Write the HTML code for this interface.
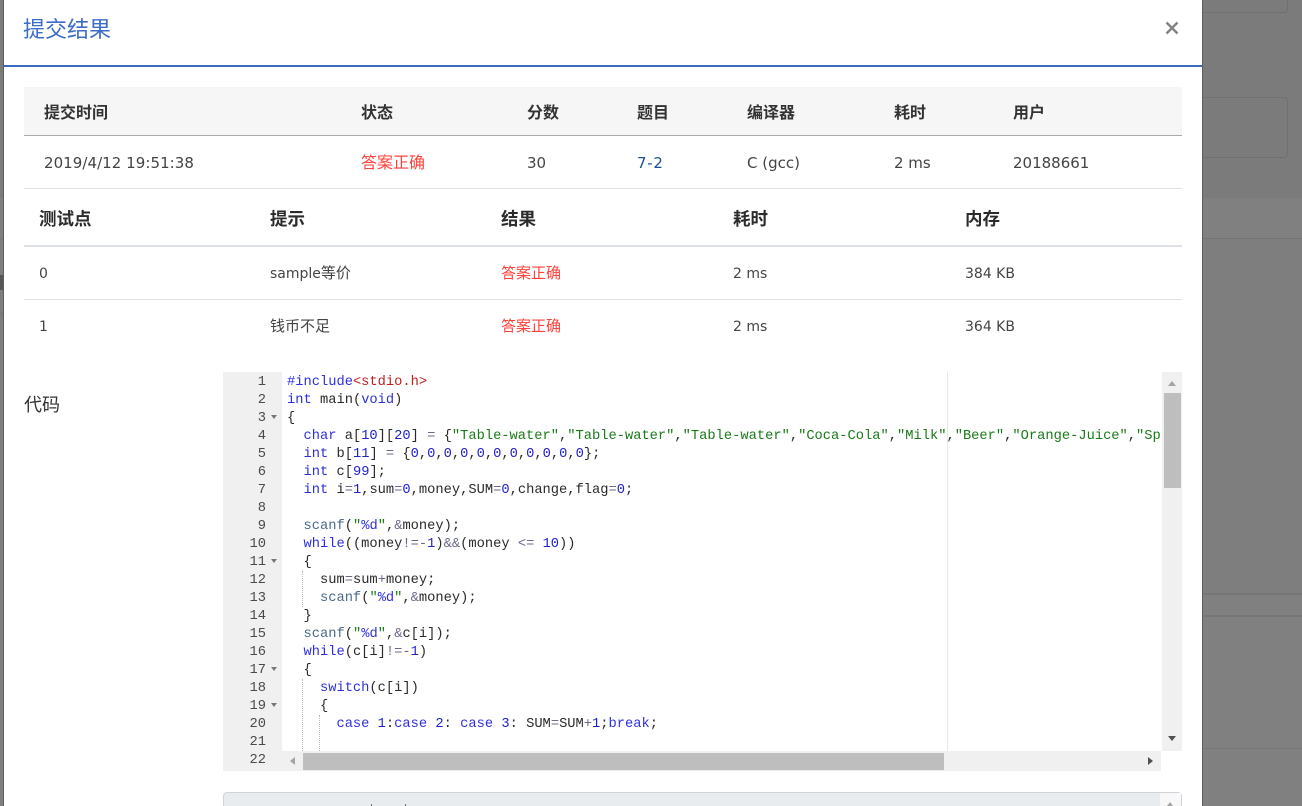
<!DOCTYPE html>
<html><head><meta charset="utf-8">
<style>
html,body{margin:0;padding:0;width:1302px;height:806px;overflow:hidden;background:#808080}
body{position:relative;font-family:"Liberation Sans","Noto Sans CJK SC",sans-serif;font-size:15px;color:#333}
.a{position:absolute}
.t{position:absolute;white-space:nowrap;line-height:20px;font-family:"DejaVu Sans","Noto Sans CJK SC",sans-serif;font-size:14px;color:#444}
.b{font-size:15px}
.c{font-family:"Liberation Sans","Noto Sans CJK SC",sans-serif;font-size:15px}
.th{position:absolute;white-space:nowrap;line-height:20px;font-weight:bold;font-size:16px;color:#333}
.r{color:#ff413a;font-family:"Liberation Sans","Noto Sans CJK SC",sans-serif;font-size:15px}
#code{position:absolute;left:282px;top:372px;width:879px;height:379px;overflow:hidden;background:#fff}
.l{position:absolute;left:5px;height:18px;line-height:18px;margin-top:0;white-space:pre;font-family:"Liberation Mono",monospace;font-size:13.74px;color:#2a2a2a;transform:translateY(2px)}
.n{position:absolute;left:223px;width:43px;text-align:right;height:18px;line-height:18px;font-family:"Liberation Mono",monospace;font-size:13.74px;color:#4a4a4a;transform:translateY(2px)}
.k{color:#2f2fe0}.s{color:#1a7a1a}.d{color:#2222cc}.o{color:#6a6a8a}.m{color:#4a6a88}.p{color:#c02020}
.f{position:absolute;left:271px;width:0;height:0;border-left:3.5px solid transparent;border-right:3.5px solid transparent;border-top:4px solid #777}
.g{position:absolute;width:0;border-left:1px dotted #bbb}
</style></head><body>
<!-- backdrop -->
<div class="a" style="left:0;top:0;width:1302px;height:198px;background:#7b7b7b"></div>
<div class="a" style="left:0;top:198px;width:1302px;height:40px;background:#808080"></div>
<div class="a" style="left:0;top:238px;width:1302px;height:356px;background:#7e7e7e"></div>
<div class="a" style="left:1190px;top:-10px;width:96px;height:21px;border:1px solid #707070;border-radius:4px"></div>
<div class="a" style="left:1190px;top:97px;width:96px;height:59px;border:1px solid #707070;border-radius:4px"></div>
<div class="a" style="left:1202px;top:238px;width:100px;height:1px;background:#747474"></div>
<div class="a" style="left:1202px;top:593px;width:100px;height:2px;background:#767676"></div>
<div class="a" style="left:1202px;top:615px;width:100px;height:2px;background:#767676"></div>
<div class="a" style="left:1202px;top:748px;width:100px;height:1px;background:#767676"></div>
<div class="a" style="left:0;top:238px;width:4px;height:1px;background:#747474"></div>
<div class="a" style="left:0;top:313px;width:4px;height:1px;background:#747474"></div>
<div class="a" style="left:0;top:275px;width:3px;height:15px;background:#565656"></div>
<!-- modal -->
<div class="a" style="left:3px;top:0;width:1200px;height:806px;background:#5f5f5f"></div>
<div class="a" style="left:4px;top:0;width:1198px;height:806px;background:#fff"></div>
<div class="a" style="left:23px;top:15px;line-height:30px;font-size:22px;color:#3b6cc8;white-space:nowrap">提交结果</div>
<div class="a" style="left:4px;top:65px;width:1198px;height:2px;background:#3b6cc4"></div>
<svg class="a" style="left:1165px;top:21px" width="14" height="14" viewBox="0 0 14 14"><path d="M1.5 1.5L12.5 12.5M12.5 1.5L1.5 12.5" stroke="#848484" stroke-width="2.5" fill="none"/></svg>
<!-- table 1 -->
<div class="a" style="left:24px;top:87px;width:1158px;height:48px;background:#f6f6f6"></div>
<div class="a" style="left:24px;top:135px;width:1158px;height:1px;background:#aaa"></div>
<div class="a" style="left:24px;top:188px;width:1158px;height:1px;background:#dee2e6"></div>
<div class="th" style="left:44px;top:104px">提交时间</div>
<div class="th" style="left:361px;top:104px">状态</div>
<div class="th" style="left:527px;top:104px">分数</div>
<div class="th" style="left:637px;top:104px">题目</div>
<div class="th" style="left:747px;top:104px">编译器</div>
<div class="th" style="left:894px;top:104px">耗时</div>
<div class="th" style="left:1013px;top:104px">用户</div>
<div class="t b" style="left:44px;top:153px;letter-spacing:.05px">2019/4/12 19:51:38</div>
<div class="t r" style="left:361px;top:154px;font-size:16px">答案正确</div>
<div class="t b" style="left:527px;top:153px">30</div>
<div class="t b" style="left:637px;top:153px;color:#1c4f94;letter-spacing:.7px">7-2</div>
<div class="t b" style="left:747px;top:153px">C (gcc)</div>
<div class="t b" style="left:894px;top:153px">2 ms</div>
<div class="t b" style="left:1013px;top:153px">20188661</div>
<!-- table 2 -->
<div class="th" style="left:39px;top:209px;font-size:17.5px;color:#2b2b2b">测试点</div>
<div class="th" style="left:270px;top:209px;font-size:17.5px;color:#2b2b2b">提示</div>
<div class="th" style="left:501px;top:209px;font-size:17.5px;color:#2b2b2b">结果</div>
<div class="th" style="left:733px;top:209px;font-size:17.5px;color:#2b2b2b">耗时</div>
<div class="th" style="left:965px;top:209px;font-size:17.5px;color:#2b2b2b">内存</div>
<div class="a" style="left:24px;top:245px;width:1158px;height:2px;background:#dee2e6"></div>
<div class="a" style="left:24px;top:299px;width:1158px;height:1px;background:#dee2e6"></div>
<div class="t" style="left:39px;top:264px">0</div>
<div class="t" style="left:270px;top:264px">sample<span class="c">等价</span></div>
<div class="t r" style="left:501px;top:264px">答案正确</div>
<div class="t" style="left:733px;top:264px">2 ms</div>
<div class="t" style="left:965px;top:264px">384 KB</div>
<div class="t" style="left:39px;top:317px">1</div>
<div class="t c" style="left:270px;top:317px">钱币不足</div>
<div class="t r" style="left:501px;top:317px">答案正确</div>
<div class="t" style="left:733px;top:317px">2 ms</div>
<div class="t" style="left:965px;top:317px">364 KB</div>
<div class="a" style="left:24px;top:393px;line-height:24px;font-size:18px;color:#333;white-space:nowrap">代码</div>
<!-- editor -->
<div class="a" style="left:223px;top:372px;width:59px;height:399px;background:#f0f0f0"></div>
<div id="code">
<div class="a" style="left:665px;top:0;width:1px;height:379px;background:#e8e8e8"></div>
<div class="g" style="left:20px;top:199px;height:36px"></div>
<div class="g" style="left:20px;top:307px;height:72px"></div>
<div class="g" style="left:37px;top:343px;height:36px"></div>
<div class="l" style="top:0"><span class="k">#include</span><span class="p">&lt;stdio.h&gt;</span></div>
<div class="l" style="top:18px"><span class="k">int</span> main(<span class="k">void</span>)</div>
<div class="l" style="top:36px">{</div>
<div class="l" style="top:54px">  <span class="k">char</span> a[<span class="d">10</span>][<span class="d">20</span>] <span class="o">=</span> {<span class="s">"Table-water"</span>,<span class="s">"Table-water"</span>,<span class="s">"Table-water"</span>,<span class="s">"Coca-Cola"</span>,<span class="s">"Milk"</span>,<span class="s">"Beer"</span>,<span class="s">"Orange-Juice"</span>,<span class="s">"Sprite"</span>,<span class="s">"Oolong-Tea"</span>};</div>
<div class="l" style="top:72px">  <span class="k">int</span> b[<span class="d">11</span>] <span class="o">=</span> {<span class="d">0</span>,<span class="d">0</span>,<span class="d">0</span>,<span class="d">0</span>,<span class="d">0</span>,<span class="d">0</span>,<span class="d">0</span>,<span class="d">0</span>,<span class="d">0</span>,<span class="d">0</span>,<span class="d">0</span>};</div>
<div class="l" style="top:90px">  <span class="k">int</span> c[<span class="d">99</span>];</div>
<div class="l" style="top:108px">  <span class="k">int</span> i<span class="o">=</span><span class="d">1</span>,sum<span class="o">=</span><span class="d">0</span>,money,SUM<span class="o">=</span><span class="d">0</span>,change,flag<span class="o">=</span><span class="d">0</span>;</div>
<div class="l" style="top:144px">  <span class="m">scanf</span>(<span class="s">"</span><span class="k">%d</span><span class="s">"</span>,<span class="o">&amp;</span>money);</div>
<div class="l" style="top:162px">  <span class="k">while</span>((money<span class="o">!=-</span><span class="d">1</span>)<span class="o">&amp;&amp;</span>(money <span class="o">&lt;=</span> <span class="d">10</span>))</div>
<div class="l" style="top:180px">  {</div>
<div class="l" style="top:198px">    sum<span class="o">=</span>sum<span class="o">+</span>money;</div>
<div class="l" style="top:216px">    <span class="m">scanf</span>(<span class="s">"</span><span class="k">%d</span><span class="s">"</span>,<span class="o">&amp;</span>money);</div>
<div class="l" style="top:234px">  }</div>
<div class="l" style="top:252px">  <span class="m">scanf</span>(<span class="s">"</span><span class="k">%d</span><span class="s">"</span>,<span class="o">&amp;</span>c[i]);</div>
<div class="l" style="top:270px">  <span class="k">while</span>(c[i]<span class="o">!=-</span><span class="d">1</span>)</div>
<div class="l" style="top:288px">  {</div>
<div class="l" style="top:306px">    <span class="k">switch</span>(c[i])</div>
<div class="l" style="top:324px">    {</div>
<div class="l" style="top:342px">      <span class="k">case</span> <span class="d">1</span>:<span class="k">case</span> <span class="d">2</span>: <span class="k">case</span> <span class="d">3</span>: SUM<span class="o">=</span>SUM<span class="o">+</span><span class="d">1</span>;<span class="k">break</span>;</div>
</div>
<div class="n" style="top:372px">1</div><div class="n" style="top:390px">2</div><div class="n" style="top:408px">3</div><div class="n" style="top:426px">4</div><div class="n" style="top:444px">5</div><div class="n" style="top:462px">6</div><div class="n" style="top:480px">7</div><div class="n" style="top:498px">8</div><div class="n" style="top:516px">9</div><div class="n" style="top:534px">10</div><div class="n" style="top:552px">11</div><div class="n" style="top:570px">12</div><div class="n" style="top:588px">13</div><div class="n" style="top:606px">14</div><div class="n" style="top:624px">15</div><div class="n" style="top:642px">16</div><div class="n" style="top:660px">17</div><div class="n" style="top:678px">18</div><div class="n" style="top:696px">19</div><div class="n" style="top:714px">20</div><div class="n" style="top:732px">21</div><div class="n" style="top:750px">22</div>
<div class="f" style="top:415px"></div><div class="f" style="top:559px"></div><div class="f" style="top:667px"></div><div class="f" style="top:703px"></div>
<!-- h scrollbar -->
<div class="a" style="left:282px;top:751px;width:879px;height:20px;background:#f0f0f0"></div>
<div class="a" style="left:303px;top:753px;width:641px;height:17px;background:#bebebe"></div>
<div class="a" style="left:290px;top:757px;width:0;height:0;border-top:4.5px solid transparent;border-bottom:4.5px solid transparent;border-right:5px solid #a3a3a3"></div>
<div class="a" style="left:1148px;top:757px;width:0;height:0;border-top:4.5px solid transparent;border-bottom:4.5px solid transparent;border-left:5px solid #505050"></div>
<!-- v scrollbar -->
<div class="a" style="left:1162px;top:372px;width:20px;height:379px;background:#f0f0f0"></div>
<div class="a" style="left:1164px;top:393px;width:17px;height:95px;background:#bebebe"></div>
<div class="a" style="left:1168px;top:381px;width:0;height:0;border-left:4.5px solid transparent;border-right:4.5px solid transparent;border-bottom:5px solid #a3a3a3"></div>
<div class="a" style="left:1168px;top:736px;width:0;height:0;border-left:4.5px solid transparent;border-right:4.5px solid transparent;border-top:5px solid #505050"></div>
<!-- bottom box -->
<div class="a" style="left:223px;top:792px;width:959px;height:30px;background:#e9ecef;border:1px solid #ced4da;border-radius:4px;box-sizing:border-box"></div>
<div class="a" style="left:1160px;top:793px;width:21px;height:13px;background:#f8f8f8"></div>
<div class="a" style="left:1167px;top:802px;width:0;height:0;border-left:3.5px solid transparent;border-right:3.5px solid transparent;border-bottom:4px solid #a3a3a3"></div>
<div class="a" style="left:371px;top:804px;width:1px;height:2px;background:#777"></div>
<div class="a" style="left:405px;top:804px;width:1px;height:2px;background:#777"></div>
</body></html>
